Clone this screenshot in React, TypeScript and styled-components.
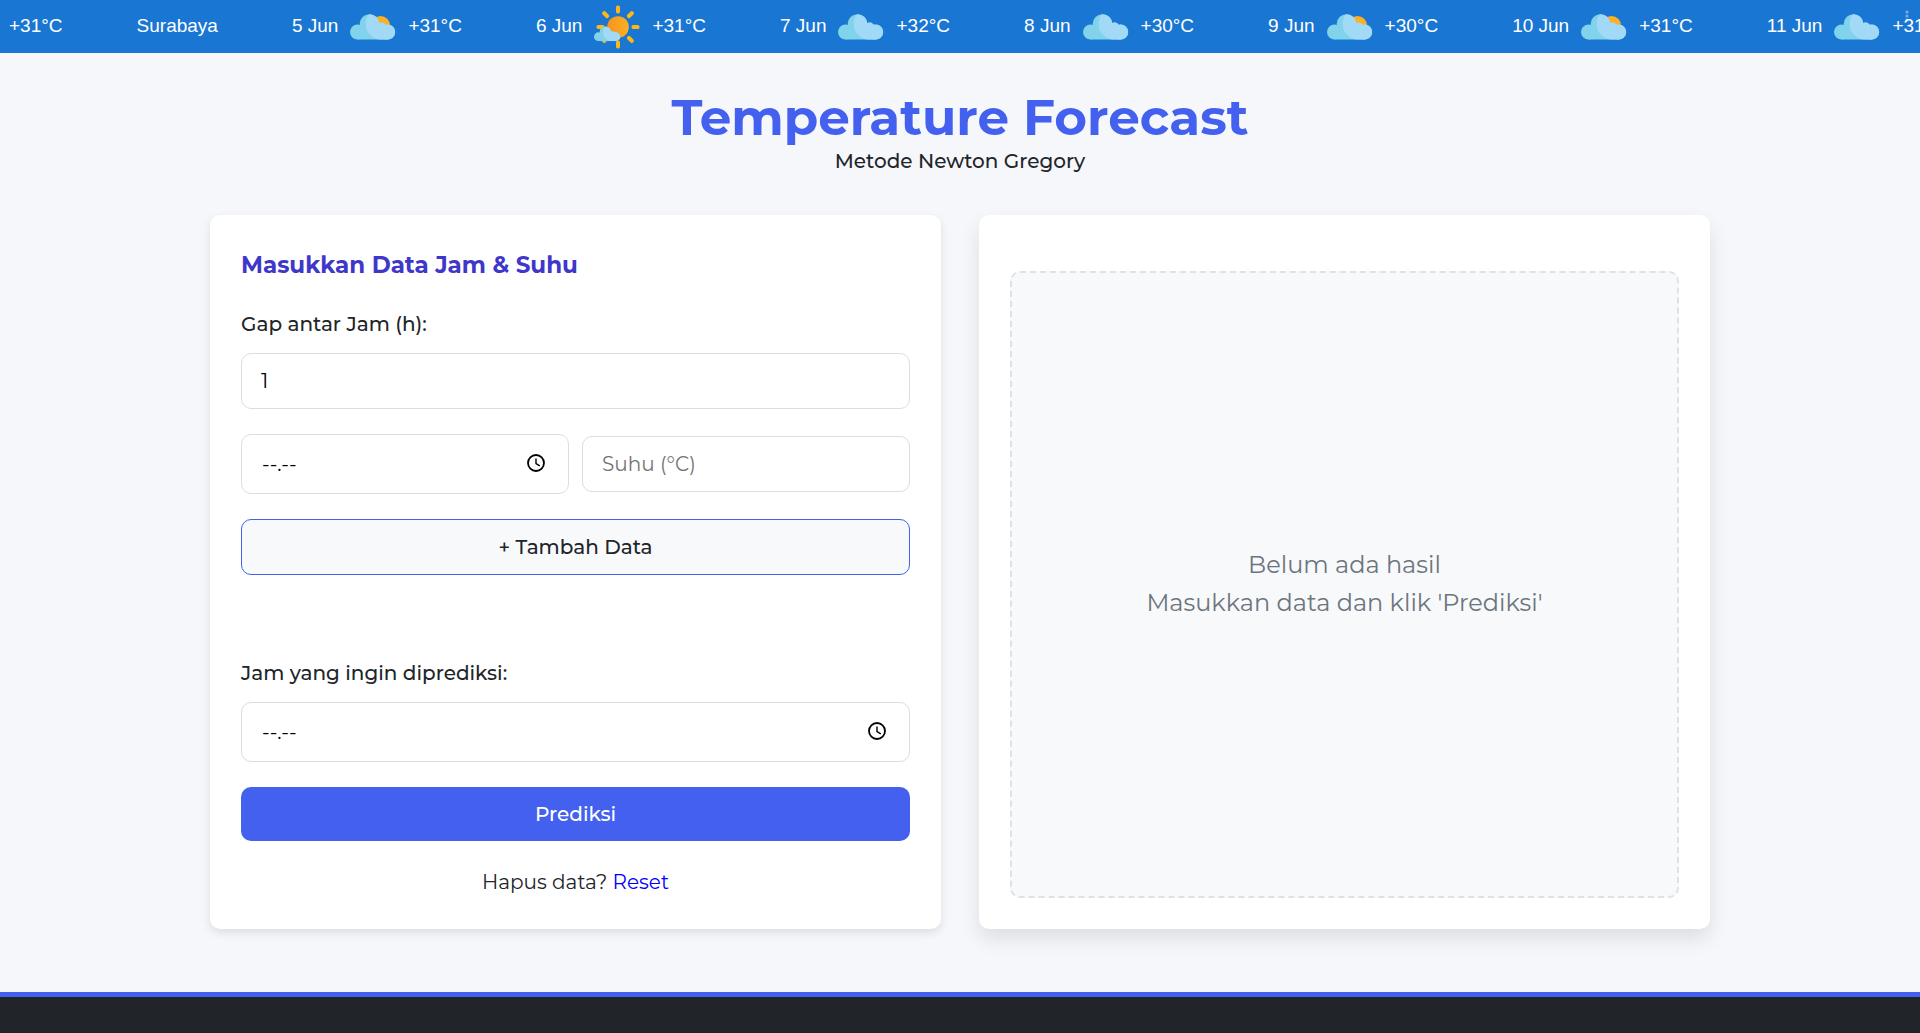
import React, { useId, useState } from "react";
import styled, { createGlobalStyle } from "styled-components";

const GlobalStyle = createGlobalStyle`
  *, *::before, *::after { box-sizing: border-box; }
  body {
    margin: 0;
    background: #f5f7fb;
    color: #212529;
    font-family: Montserrat, Inter, sans-serif;
    font-size: 20px;
    line-height: 30px;
  }
  input, button { font: inherit; }
`;

const Page = styled.div`
  min-height: 100vh;
  display: flex;
  flex-direction: column;
`;

const Ticker = styled.section`
  position: relative;
  height: 53px;
  padding-left: 9px;
  display: flex;
  align-items: center;
  gap: 74px;
  overflow: hidden;
  background: #1976d2;
  color: #fff;
  font-family: "Liberation Sans", Arial, sans-serif;
  font-size: 19px;
  line-height: 24px;
  white-space: nowrap;
`;

const TickerItem = styled.div`
  flex: none;
  display: flex;
  align-items: center;
  gap: 11px;

  svg { display: block; }
`;

const TickerText = styled.span`
  padding-bottom: 2px;
`;

const TickerMenu = styled.svg`
  position: absolute;
  top: 10px;
  right: 10px;
`;

const Header = styled.header`
  padding: 37px 20px 0;
  text-align: center;
`;

const Title = styled.h1`
  margin: 0 0 1px;
  color: #4361ee;
  font-size: 50px;
  font-weight: 700;
  line-height: 55px;
`;

const Subtitle = styled.p`
  margin: 0;
  font-weight: 500;
`;

const Main = styled.main`
  width: 100%;
  max-width: 1540px;
  margin: 0 auto;
  padding: 39px 20px 63px;
  display: grid;
  grid-template-columns: 1fr 1fr;
  gap: 38px;
`;

const Card = styled.section<{ $raised?: boolean }>`
  display: flex;
  flex-direction: column;
  padding: 32px 31px 31px;
  border-radius: 10px;
  background: #fff;
  box-shadow: ${(p) =>
    p.$raised
      ? "0 10px 20px rgba(0, 0, 0, 0.1)"
      : "0 4px 10px rgba(0, 0, 0, 0.1)"};
`;

const CardTitle = styled.h2`
  margin: 0 0 26px;
  color: #3f37c9;
  font-size: 23px;
  font-weight: 700;
  line-height: 36px;
`;

const Form = styled.form`
  display: flex;
  flex-direction: column;
`;

const Label = styled.label`
  margin-bottom: 14px;
  font-weight: 500;
`;

const Input = styled.input<{ $tall?: boolean }>`
  width: 100%;
  height: ${(p) => (p.$tall ? 60 : 56)}px;
  padding: 0 ${(p) => (p.$tall ? 20 : 19)}px;
  border: 1px solid #ddd;
  border-radius: 10px;
  background: #fff;
  color: #000;
  outline: none;

  &::placeholder {
    color: ${(p) => (p.$tall ? "#000" : "#757575")};
    opacity: 1;
  }
`;

const Row = styled.div`
  display: grid;
  grid-template-columns: 1fr 1fr;
  align-items: center;
  gap: 13px;
  margin: 25px 0;
`;

const TimeBox = styled.div`
  position: relative;
`;

const ClockButton = styled.button`
  position: absolute;
  top: 19px;
  right: 23px;
  width: 20px;
  height: 20px;
  padding: 0;
  border: 0;
  background: none;
  color: #000;

  svg { display: block; }
`;

const AddButton = styled.button`
  height: 56px;
  margin-bottom: 83px;
  border: 1px solid #4361ee;
  border-radius: 10px;
  background: #f8f9fb;
  color: #212529;
  font-weight: 500;
`;

const SubmitButton = styled.button`
  height: 54px;
  margin: 25px 0;
  border: 0;
  border-radius: 10px;
  background: #4361ee;
  color: #fff;
  font-weight: 500;
`;

const ResetLine = styled.p`
  margin: 0;
  line-height: 32px;
  text-align: center;
`;

const ResetLink = styled.a`
  color: #00f;
  text-decoration: none;
`;

const EmptyResult = styled.div`
  flex: 1;
  display: flex;
  align-items: center;
  justify-content: center;
  margin-top: 24px;
  padding-bottom: 2px;
  border: 2px dashed #dee2e6;
  border-radius: 10px;
  background: #f8f9fb;
  color: #6c757d;
  font-size: 24px;
  line-height: 38px;
  text-align: center;
`;

const Footer = styled.footer`
  flex: 1;
  min-height: 40px;
  border-top: 5px solid #4361ee;
  background: #212529;
`;

function CloudBody() {
  return (
    <>
      <circle cx="8.500" cy="29" r="7.500" />
      <circle cx="20.500" cy="21" r="9.800" />
      <circle cx="32.500" cy="24.500" r="5" />
      <circle cx="38.700" cy="29" r="7.500" />
      <rect x="8.500" y="25" width="30.200" height="11.500" />
    </>
  );
}

function CloudShape() {
  const clip = useId();
  return (
    <>
      <clipPath id={clip}>
        <path d="M20.500 10Q16.500 15 16.700 22Q17.500 33 30 37H48V10z" />
      </clipPath>
      <g fill="#80d3ea">
        <CloudBody />
      </g>
      <g fill="#a2d9f6" clipPath={`url(#${clip})`}>
        <CloudBody />
      </g>
    </>
  );
}

function Cloud({ sun }: { sun?: boolean }) {
  return (
    <svg width="48" height="48" viewBox="0 0 48 48" aria-hidden="true">
      {sun && <circle cx="31.500" cy="22.500" r="9.500" fill="#fdb022" />}
      <CloudShape />
    </svg>
  );
}

function Sunny() {
  const rays = [0, 45, 90, 135, 180, 225, 270, 315];
  return (
    <svg width="48" height="48" viewBox="0 0 48 48" aria-hidden="true">
      <defs>
        <linearGradient id="sun-face">
          <stop offset="0" stopColor="#f7931e" />
          <stop offset="1" stopColor="#fbb023" />
        </linearGradient>
      </defs>
      {rays.map((angle) => (
        <rect
          key={angle}
          x="23"
          y="2.500"
          width="4"
          height="8"
          rx="1.700"
          fill="#fdb813"
          transform={`rotate(${angle} 25 24)`}
        />
      ))}
      <circle cx="25" cy="24" r="10.800" fill="url(#sun-face)" />
      <g transform="translate(0.4 16.9) scale(0.58)">
        <CloudShape />
      </g>
    </svg>
  );
}

function Clock() {
  return (
    <svg width="20" height="20" viewBox="0 0 20 20" fill="none" stroke="currentColor" aria-hidden="true">
      <circle cx="10" cy="10" r="8" strokeWidth="1.800" />
      <path d="M10 5.500v5l3.800 2.400" strokeWidth="1.400" />
    </svg>
  );
}

type Day = { date: string; sky: "partly" | "sunny" | "cloudy"; temp: string };

const days: Day[] = [
  { date: "5 Jun", sky: "partly", temp: "+31°C" },
  { date: "6 Jun", sky: "sunny", temp: "+31°C" },
  { date: "7 Jun", sky: "cloudy", temp: "+32°C" },
  { date: "8 Jun", sky: "cloudy", temp: "+30°C" },
  { date: "9 Jun", sky: "partly", temp: "+30°C" },
  { date: "10 Jun", sky: "partly", temp: "+31°C" },
  { date: "11 Jun", sky: "cloudy", temp: "+31°C" },
];

function TimeField({ id, label }: { id: string; label?: string }) {
  const [value, setValue] = useState("");
  return (
    <TimeBox>
      <Input
        id={id}
        $tall
        aria-label={label}
        placeholder="--.--"
        value={value}
        onChange={(e) => setValue(e.target.value)}
      />
      <ClockButton type="button" aria-label="Pilih jam">
        <Clock />
      </ClockButton>
    </TimeBox>
  );
}

export default function App() {
  return (
    <Page>
      <GlobalStyle />
      <Ticker>
        <TickerItem>
          <TickerText>+31°C</TickerText>
        </TickerItem>
        <TickerItem>
          <TickerText>Surabaya</TickerText>
        </TickerItem>
        {days.map((day) => (
          <TickerItem key={day.date}>
            <TickerText>{day.date}</TickerText>
            {day.sky === "sunny" ? <Sunny /> : <Cloud sun={day.sky === "partly"} />}
            <TickerText>{day.temp}</TickerText>
          </TickerItem>
        ))}
        <TickerMenu width="6" height="12" viewBox="0 0 6 12" fill="#fff" opacity="0.4" aria-hidden="true">
          <circle cx="3" cy="2" r="1.600" />
          <circle cx="3" cy="6" r="1.600" />
          <circle cx="3" cy="10" r="1.600" />
        </TickerMenu>
      </Ticker>

      <Header>
        <Title>Temperature Forecast</Title>
        <Subtitle>Metode Newton Gregory</Subtitle>
      </Header>

      <Main>
        <Card>
          <CardTitle>Masukkan Data Jam &amp; Suhu</CardTitle>
          <Form onSubmit={(e) => e.preventDefault()}>
            <Label htmlFor="gap">Gap antar Jam (h):</Label>
            <Input id="gap" defaultValue="1" inputMode="numeric" />
            <Row>
              <TimeField id="jam" label="Jam" />
              <Input aria-label="Suhu" placeholder="Suhu (°C)" inputMode="decimal" />
            </Row>
            <AddButton type="button">+ Tambah Data</AddButton>
            <Label htmlFor="target">Jam yang ingin diprediksi:</Label>
            <TimeField id="target" />
            <SubmitButton type="submit">Prediksi</SubmitButton>
            <ResetLine>
              Hapus data? <ResetLink href="#">Reset</ResetLink>
            </ResetLine>
          </Form>
        </Card>
        <Card $raised>
          <EmptyResult>
            Belum ada hasil
            <br />
            Masukkan data dan klik 'Prediksi'
          </EmptyResult>
        </Card>
      </Main>
      <Footer />
    </Page>
  );
}
